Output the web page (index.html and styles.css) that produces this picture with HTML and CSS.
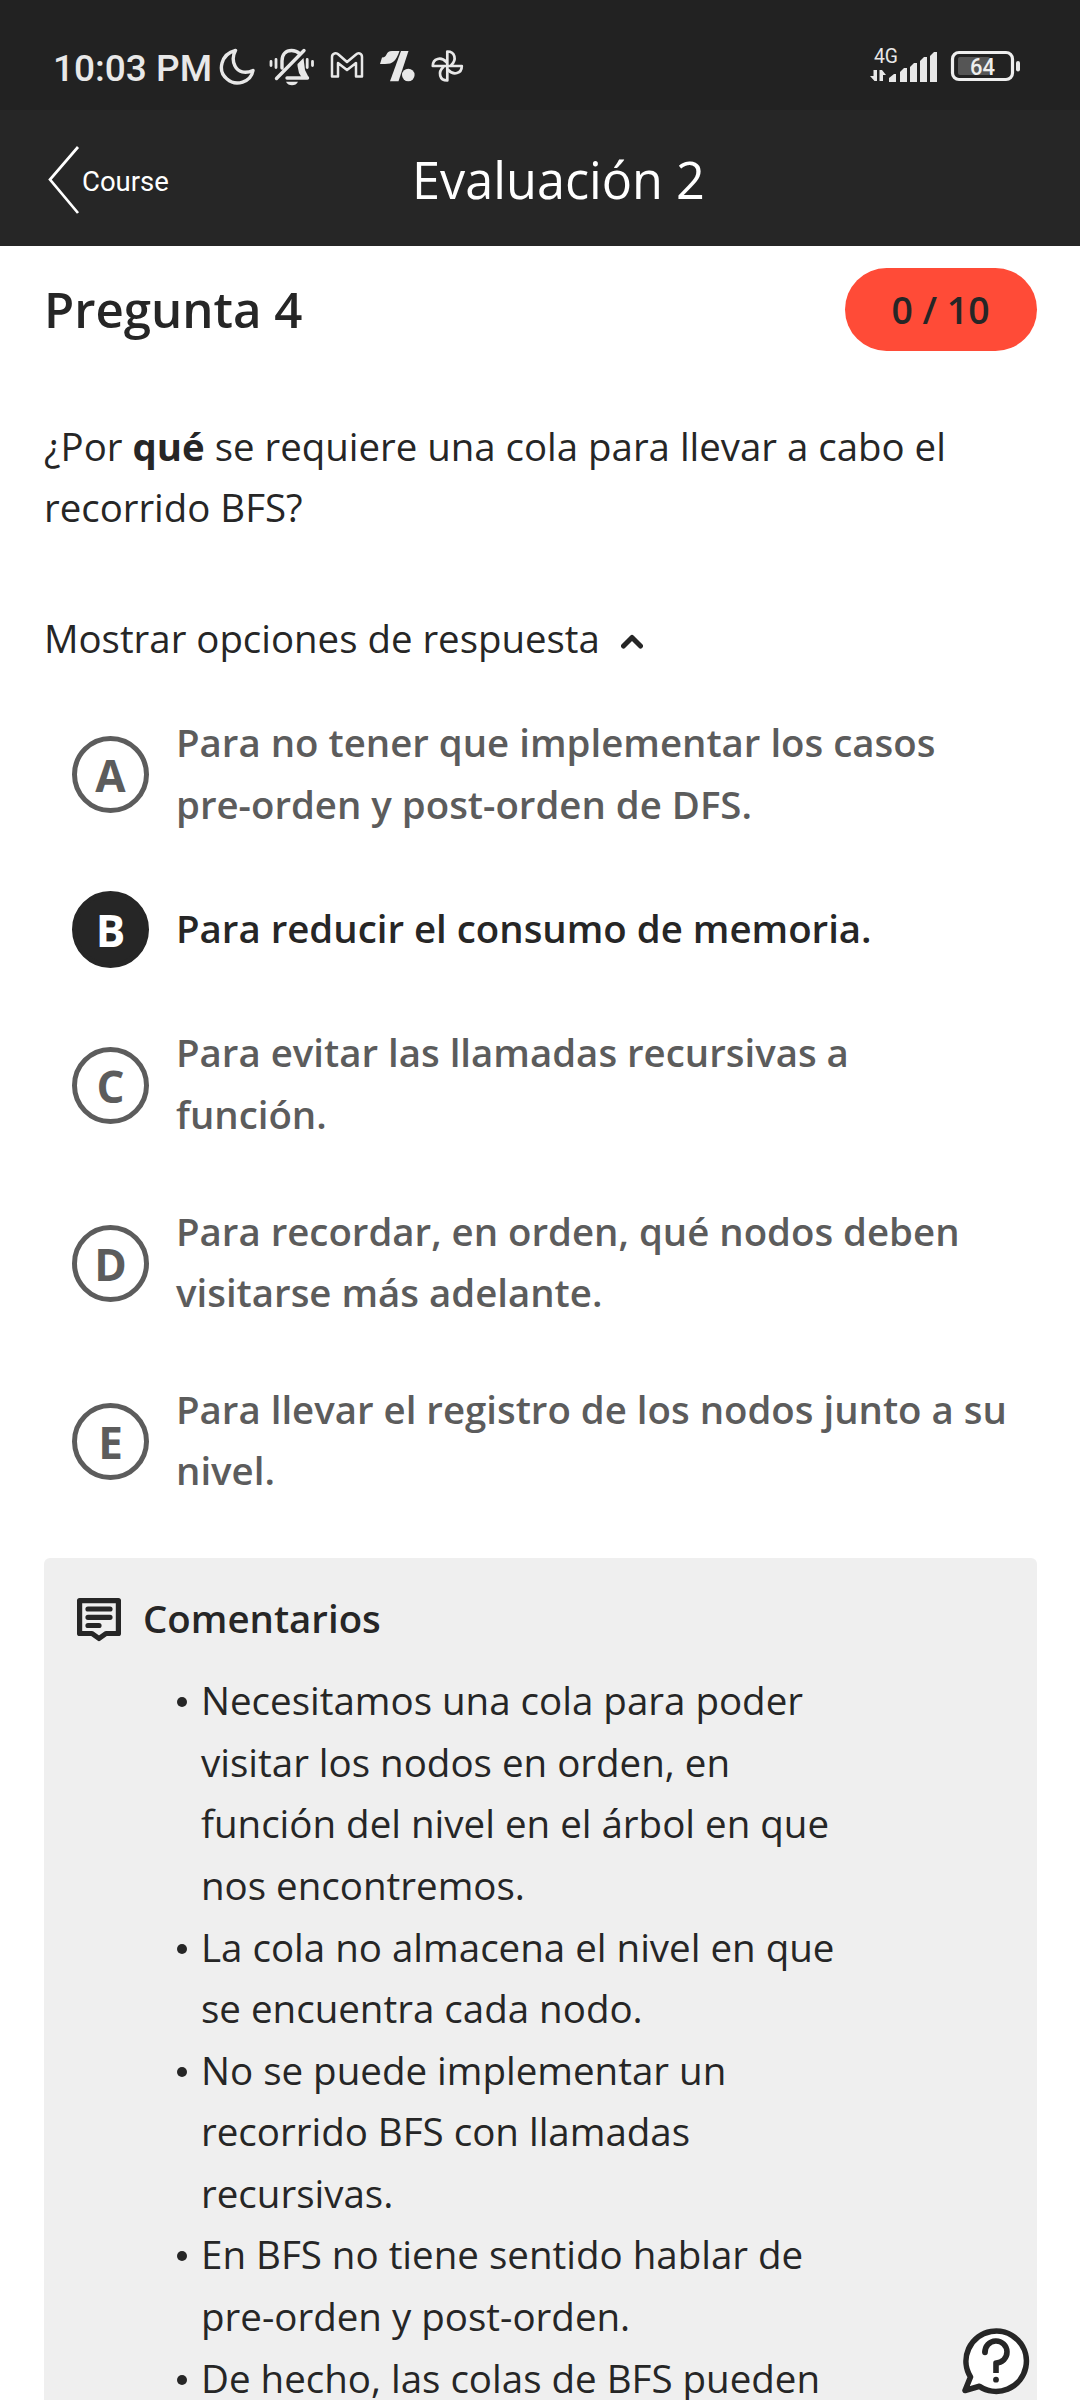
FILE: index.html
```html
<!DOCTYPE html>
<html lang="es">
<head>
<meta charset="utf-8">
<title>Evaluación 2</title>
<link rel="stylesheet" href="styles.css">
</head>
<body>
<div class="status">
  <span class="clock">10:03 PM</span>
  <svg class="status-icons" width="250" height="46" viewBox="0 0 250 46" fill="none" stroke="#e8e8e8" stroke-width="3.4" stroke-linejoin="round" stroke-linecap="round">
    <path d="M16.500 6.500C2 10 -2 27 8 35C17 43 32 38 34 26.500C26 30 19 28 16 22C13.500 17 14 11 16.500 6.500Z"/>
    <path d="M63 24V17C63 10 67 6.500 72.500 6.500C76 6.500 78.500 7.500 80.500 9.500M57.500 34.500L85 6.500M68 34H88.500"/>
    <path d="M84.500 14L78.500 20V22L80 29L83 34H90L86 26Z" fill="#e8e8e8" stroke="none"/>
    <path d="M52 17.500V21.500M57 15.500V23.500M88.200 15.500V23.500M93.500 17.500V21.500" stroke-width="2.800"/>
    <path d="M67 37.800H79C77 42.500 69 42.500 67 37.800Z" fill="#e8e8e8" stroke="none"/>
    <path d="M113 32.500H119V19L128 26L137 19V32.500H143V13C143 9 139 8.500 137 10.500L128 18L119.500 10.500C117.500 8.500 113 9 113 13V32.500Z" stroke-width="2.500"/>
    <g fill="#e8e8e8" stroke="none">
      <path d="M161 20L163 13.500C169 13.500 166 7 173 7H180.500C177 17 174 20 166 20Z"/>
      <circle cx="189.300" cy="31" r="6.300"/>
      <path d="M182 7H189.500L179.500 37.300H171Z"/>
    </g>
    <g stroke-width="2.700" transform="translate(228.300 22)">
      <path d="M0 0V-14.500C8 -14.500 9.500 -6 4 -1"/>
      <path d="M0 0V-14.500C8 -14.500 9.500 -6 4 -1" transform="rotate(90)"/>
      <path d="M0 0V-14.500C8 -14.500 9.500 -6 4 -1" transform="rotate(180)"/>
      <path d="M0 0V-14.500C8 -14.500 9.500 -6 4 -1" transform="rotate(270)"/>
    </g>
  </svg>
  <div class="status-right">
    <svg width="160" height="46" viewBox="0 0 160 46">
      <text class="net" x="4" y="19" textLength="24" lengthAdjust="spacingAndGlyphs">4G</text>
      <path d="M7 26V37H4.500L0 32H3.500V26ZM9.500 37V26H12L16 31H13V37Z" fill="#e8e8e8"/>
      <path d="M19 38V34L24 30H26V38ZM30 38V28L34 24H37V38ZM40 38V23L44 19H47V38ZM50 38V17L54 13H57V38ZM60 38V12L64 8H67V38Z" fill="#e8e8e8"/>
      <rect x="82.500" y="8.500" width="60" height="27" rx="6.500" fill="none" stroke="#eee" stroke-width="3.200"/>
      <rect x="88" y="13" width="32" height="18" rx="2" fill="#555"/>
      <rect x="146" y="17" width="4" height="10.500" rx="2" fill="#e8e8e8"/>
      <text class="level" x="100" y="31" textLength="25" lengthAdjust="spacingAndGlyphs">64</text>
    </svg>
  </div>
</div>
<header class="bar">
  <div class="back">
    <svg width="32" height="68" viewBox="0 0 32 68" fill="none" stroke="#fff" stroke-width="2.700"><path d="M30 1L2 33.500L30 67"/></svg>
    <span>Course</span>
  </div>
  <h1 class="title">Evaluación 2</h1>
</header>
<main class="page">
  <div class="question-head">
    <h2>Pregunta 4</h2>
    <span class="score">0 / 10</span>
  </div>
  <p class="prompt">¿Por <b>qué</b> se requiere una cola para llevar a cabo el<br>recorrido BFS?</p>
  <div class="toggle">Mostrar opciones de respuesta
    <svg width="22" height="15" viewBox="0 0 22 15" fill="none" stroke="#262626" stroke-width="5" stroke-linecap="round" stroke-linejoin="round"><path d="M2.500 12L11 3.500L19.500 12"/></svg>
  </div>
  <ul class="options">
    <li><span class="letter">A</span><span>Para no tener que implementar los casos<br>pre-orden y post-orden de DFS.</span></li>
    <li class="chosen"><span class="letter">B</span><span>Para reducir el consumo de memoria.</span></li>
    <li><span class="letter">C</span><span>Para evitar las llamadas recursivas a<br>función.</span></li>
    <li><span class="letter">D</span><span>Para recordar, en orden, qué nodos deben<br>visitarse más adelante.</span></li>
    <li><span class="letter">E</span><span>Para llevar el registro de los nodos junto a su<br>nivel.</span></li>
  </ul>
  <section class="comments">
    <h3>
      <svg width="44" height="44" viewBox="0 0 44 44" fill="none" stroke="#262626" stroke-width="5.200" stroke-linejoin="round"><path d="M2.600 2.600H41.400V35.500H29L22 40.500L15 35.500H2.600Z"/><path d="M11 11H33M11 19.300H33M11 27.500H22" stroke-linecap="round"/></svg>
      <span>Comentarios</span>
    </h3>
    <ul class="notes">
      <li>Necesitamos una cola para poder<br>visitar los nodos en orden, en<br>función del nivel en el árbol en que<br>nos encontremos.</li>
      <li>La cola no almacena el nivel en que<br>se encuentra cada nodo.</li>
      <li>No se puede implementar un<br>recorrido BFS con llamadas<br>recursivas.</li>
      <li>En BFS no tiene sentido hablar de<br>pre-orden y post-orden.</li>
      <li>De hecho, las colas de BFS pueden</li>
    </ul>
  </section>
</main>
<svg class="help" width="68" height="68" viewBox="0 0 68 68" fill="none" stroke="#262626" stroke-width="5.600" stroke-linecap="round" stroke-linejoin="round">
  <path fill="#fff" d="M8.500 50A30.200 30.200 0 1 1 17.500 59.300L3 63.500Z"/>
  <path d="M23 25.500A11 11 0 1 1 34 36V46" stroke-linecap="butt"/><path d="M23 25.500V25.500"/>
  <circle cx="34" cy="52.700" r="2.900" fill="#262626" stroke="none"/>
</svg>
</body>
</html>
```
FILE: styles.css
```css
* { box-sizing: border-box; }
html, body { height: 2400px; overflow: hidden; }
body { margin: 0; background: #fff; color: #262626; font-family: "Open Sans", sans-serif; font-size: 38.4px; line-height: 61.6px; }
h1, h2, h3, p, ul { margin: 0; padding: 0; font-size: inherit; }
ul { list-style: none; }
svg { flex: none; display: block; }

.status { height: 110px; background: #222; display: flex; padding: 44px 50px 0 53px; }
.clock { width: 166px; font: 500 37px/49px Roboto, sans-serif; color: #e8e8e8; white-space: nowrap; }
.status-right { margin-left: auto; }
.net { font: 400 20px Roboto, sans-serif; fill: #e8e8e8; }
.level { font: 500 23px Roboto, sans-serif; fill: #eee; }

.bar { height: 136px; background: #262626; color: #fff; display: grid; grid-template-columns: 1fr auto 1fr; align-items: center; padding: 4px 0 0 48px; }
.back { display: flex; align-items: center; gap: 2px; font: 400 27.500px Roboto, sans-serif; }
.back span { padding-top: 2px; }
.title { font-weight: 400; font-size: 50.400px; margin-right: 11px; padding-bottom: 1px; }

.page { padding: 22px 43.500px 0 44px; }
.question-head { height: 83px; display: flex; align-items: center; justify-content: space-between; }
.question-head h2 { font-size: 49.200px; font-weight: 600; padding-bottom: 2px; }
.score { width: 192px; height: 83px; border-radius: 42px; background: #ff4b37; text-align: center; line-height: 83px; font-weight: 600; font-size: 37.400px; }

.prompt { margin-top: 64.500px; }
.toggle { margin-top: 69.500px; display: flex; align-items: center; gap: 21px; }
.toggle svg { margin-top: 5px; }

.options { margin-top: 15px; padding-left: 28px; font-weight: 600; color: #5c5c5c; }
.options li { display: flex; align-items: center; gap: 27px; padding: 27.500px 0; }
.letter { width: 77px; height: 77px; flex: none; margin: 1px 0 -1px; border: 5px solid #5c5c5c; border-radius: 50%; text-align: center; font-weight: 700; font-size: 44px; line-height: 69px; }
.chosen { color: #262626; }
.chosen .letter { background: #262626; border-color: #262626; color: #fff; }

.comments { margin-top: 28px; height: 860px; background: #efefef; border-radius: 6px; padding: 30px 33px; }
.comments h3 { display: flex; align-items: center; gap: 22px; font-weight: 600; }
.comments h3 svg { margin-top: 4px; }
.notes { padding: 21px 0 0 124px; font-size: 38.500px; }
.notes li::before { content: ""; float: left; width: 10px; height: 10px; border-radius: 50%; background: #262626; margin: 27px 0 0 -24px; }

.help { position: fixed; left: 962px; top: 2327px; }
```
